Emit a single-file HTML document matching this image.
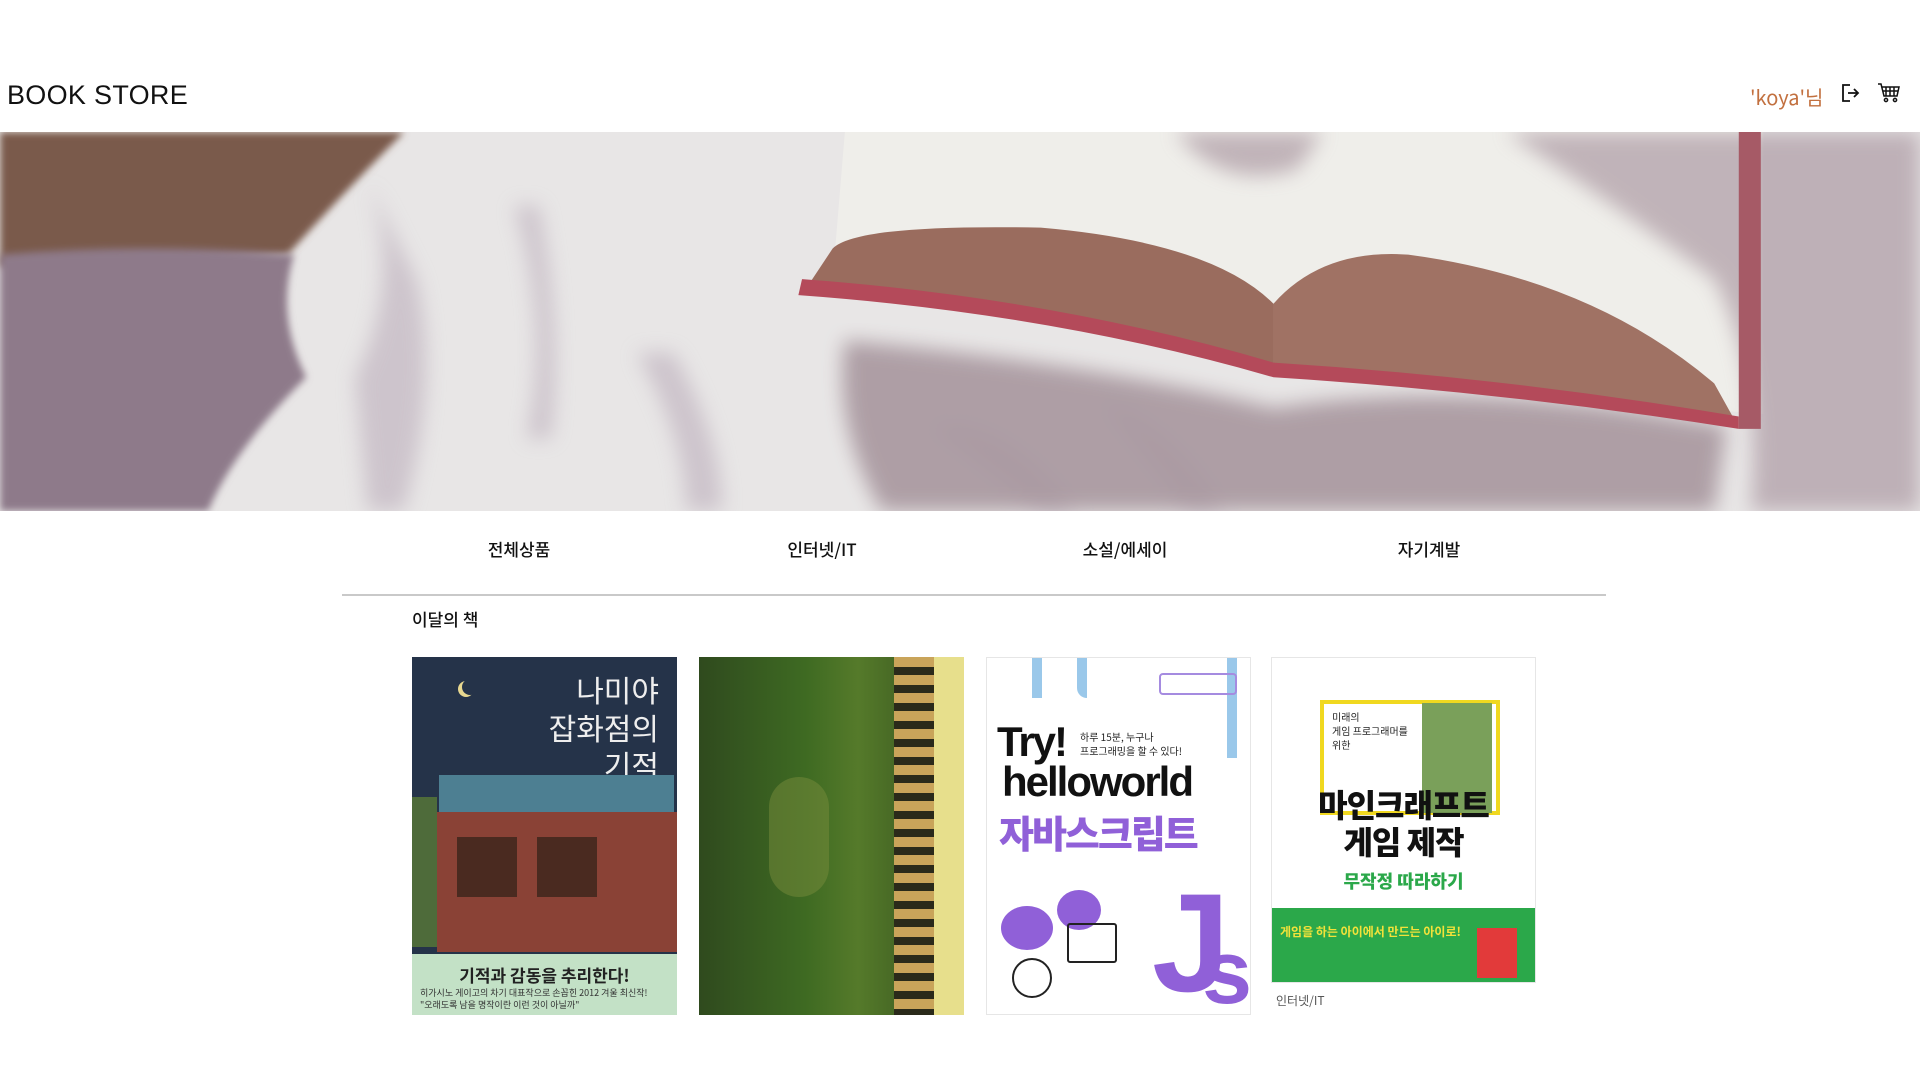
<!DOCTYPE html>
<html><head><meta charset="utf-8">
<style>
*{margin:0;padding:0;box-sizing:border-box}
body{width:1920px;height:1080px;background:#fff;font-family:"Liberation Sans","Noto Sans CJK KR",sans-serif;position:relative;overflow:hidden;color:#111}
.abs{position:absolute}
.logo{left:7px;top:80px;font-size:27px;letter-spacing:0.3px;color:#111}
.user{left:1750px;top:82px;font-size:20px;color:#c2703f}
.nav{top:536px;font-size:17px;font-family:"Noto Sans CJK KR",sans-serif;font-weight:500;transform:translateX(-50%)}
.book{position:absolute;top:657px;width:265px;height:358px;overflow:hidden}
.k{font-family:"Noto Sans CJK KR",sans-serif}
</style></head><body>
<div class="abs logo">BOOK STORE</div>
<div class="abs user k">'koya'님</div>
<svg class="abs" style="left:1841px;top:83px" width="20" height="20" viewBox="0 0 20 20" fill="none" stroke="#111" stroke-width="1.8"><path d="M9 2H2v16h7"/><path d="M7 10h10M13 6l4 4-4 4"/></svg>
<svg class="abs" style="left:1877px;top:82px" width="24" height="22" viewBox="0 0 24 22" fill="none" stroke="#111" stroke-width="1.5"><path d="M1 2h3l3 12h13l2-9H5"/><path d="M9 5v9M13 5v9M17 5v9M6 9h15"/><circle cx="9" cy="18" r="1.6"/><circle cx="18" cy="18" r="1.6"/></svg>

<svg class="abs" style="left:0;top:132px" width="1920" height="379" viewBox="0 0 1568 309" preserveAspectRatio="none">
<defs><filter id="b"><feGaussianBlur stdDeviation="8"/></filter><filter id="b2"><feGaussianBlur stdDeviation="3"/></filter></defs>
<rect width="1568" height="309" fill="#e8e6e6"/>
<g filter="url(#b)" fill="#bcaebb" opacity="0.6">
<path d="M300 40 Q330 120 290 200 L300 309 L330 309 Q360 200 340 120Z"/>
<path d="M420 60 Q450 160 430 250 L450 250 Q460 160 440 60Z"/>
<path d="M520 180 Q560 250 560 309 L590 309 Q590 250 550 180Z"/>
<path d="M760 240 Q820 230 880 309 L850 309Z"/>
<path d="M900 220 Q960 240 1000 309 L970 309Z"/>
</g>
<path d="M0 0 H330 Q280 50 235 100 L0 110Z" fill="#7a5a4c" filter="url(#b2)"/>
<path d="M0 100 Q120 90 240 100 Q225 150 250 200 Q190 260 170 309 H0Z" fill="#8e7a8a" filter="url(#b2)"/>
<path d="M690 0 H1440 V230 L1040 195 L680 120Z" fill="#efeeea"/>
<g filter="url(#b)" fill="#a8949f" opacity="0.65">
<path d="M1230 0 H1568 V309 H1430 Q1440 200 1400 120 Q1320 60 1230 0Z"/>
<path d="M960 0 Q1000 50 1060 30 L1080 0Z"/>
</g>
<path d="M690 170 Q900 190 1040 225 Q1200 200 1410 240 L1400 309 H720 Q680 240 690 170Z" fill="#a8979f" filter="url(#b)" opacity="0.9"/>
<path d="M680 95 Q700 75 850 78 Q990 90 1040 140 L1040 190 Q860 140 660 125Z" fill="#9a6c5e"/>
<path d="M1040 140 Q1080 95 1150 100 Q1300 120 1400 205 L1415 232 Q1260 205 1040 190Z" fill="#a07264"/>
<path d="M655 120 Q860 135 1040 188 Q1230 200 1420 232 L1420 242 Q1230 212 1040 200 Q860 148 652 133Z" fill="#b44a5a"/>
<path d="M1420 0 H1438 V242 H1420Z" fill="#a65a66"/>
</svg>

<div class="abs nav k" style="left:519px">전체상품</div>
<div class="abs nav k" style="left:822px">인터넷/IT</div>
<div class="abs nav k" style="left:1125px">소설/에세이</div>
<div class="abs nav k" style="left:1429px">자기계발</div>
<div class="abs" style="left:342px;top:594px;width:1264px;height:2px;background:#c9c9c9"></div>
<div class="abs k" style="left:412px;top:606px;font-size:17px;font-weight:500">이달의 책</div>

<div class="book" style="left:412px;background:#253349">
 <div class="abs" style="left:50px;top:22px;width:16px;height:16px;border-radius:50%;box-shadow:-4px 2px 0 0 #e8d890"></div>
 <div class="abs k" style="right:18px;top:14px;font-size:30px;color:#eee;text-align:right;line-height:1.25">나미야<br>잡화점의<br>기적</div>
 <div class="abs" style="left:27px;top:118px;width:235px;height:40px;background:#4d7f92"></div>
 <div class="abs" style="left:25px;top:155px;width:240px;height:140px;background:#8a4236"></div>
 <div class="abs" style="left:45px;top:180px;width:60px;height:60px;background:#4a2a20"></div>
 <div class="abs" style="left:125px;top:180px;width:60px;height:60px;background:#4a2a20"></div>
 <div class="abs" style="left:0;top:140px;width:25px;height:150px;background:#4e6b3a"></div>
 <div class="abs" style="left:0;top:297px;width:265px;height:61px;background:#c3e1c6"></div>
 <div class="abs k" style="left:0;width:265px;top:305px;text-align:center;font-size:17px;font-weight:700;color:#222">기적과 감동을 추리한다!</div>
 <div class="abs k" style="left:8px;top:330px;font-size:9px;color:#333;line-height:1.3">히가시노 게이고의 차기 대표작으로 손꼽힌 2012 겨울 최신작!<br>"오래도록 남을 명작이란 이런 것이 아닐까"</div>
</div>

<div class="book" style="left:699px;background:linear-gradient(90deg,#2f4a1e,#3e6a22 40%,#557a2a 60%,#2e4a1c)">
 <div class="abs" style="left:195px;top:0;width:40px;height:358px;background:repeating-linear-gradient(180deg,#c9a45a 0 10px,#2a2a1a 10px 18px)"></div>
 <div class="abs" style="left:235px;top:0;width:30px;height:358px;background:#e7df8c"></div>
 <div class="abs" style="left:70px;top:120px;width:60px;height:120px;background:rgba(120,140,60,.5);border-radius:30px"></div>
</div>

<div class="book" style="left:986px;background:#fff;border:1px solid #e6e6e6">
 <div class="abs" style="left:45px;top:0;width:10px;height:40px;background:#9ac8ea"></div>
 <div class="abs" style="left:90px;top:0;width:10px;height:40px;background:#9ac8ea;border-radius:0 0 0 10px"></div>
 <div class="abs" style="left:240px;top:0;width:10px;height:100px;background:#9ac8ea"></div>
 <div class="abs" style="left:172px;top:15px;width:78px;height:22px;border:2px solid #a58be0;border-radius:4px"></div>
 <div class="abs" style="left:10px;top:60px;font-size:42px;font-weight:700;letter-spacing:-2px;color:#111">Try!</div>
 <div class="abs k" style="left:93px;top:72px;font-size:10px;color:#222;line-height:1.4">하루 15분, 누구나<br>프로그래밍을 할 수 있다!</div>
 <div class="abs" style="left:15px;top:100px;font-size:42px;font-weight:700;letter-spacing:-2px;color:#111">helloworld</div>
 <div class="abs k" style="left:12px;top:146px;font-size:38px;font-weight:900;color:#9060d8;letter-spacing:-2px">자바스크립트</div>
 <div class="abs" style="left:165px;top:215px;font-size:140px;font-weight:700;color:#9060d8;line-height:1">J</div>
 <div class="abs" style="left:215px;top:270px;font-size:90px;font-weight:700;color:#9060d8;line-height:1">s</div>
 <div class="abs" style="left:14px;top:248px;width:52px;height:44px;border-radius:50%;background:#9060d8"></div>
 <div class="abs" style="left:70px;top:232px;width:44px;height:40px;border-radius:50%;background:#9060d8"></div>
 <div class="abs" style="left:80px;top:265px;width:50px;height:40px;border:2px solid #222;border-radius:3px"></div>
 <div class="abs" style="left:25px;top:300px;width:40px;height:40px;border:2px solid #222;border-radius:50%"></div>
</div>

<div class="book" style="left:1271px;height:326px;background:#fff;border:1px solid #e6e6e6">
 <div class="abs" style="left:48px;top:42px;width:180px;height:115px;border:4px solid #f0d820"></div>
 <div class="abs" style="left:150px;top:45px;width:70px;height:110px;background:#7aa05a"></div>
 <div class="abs k" style="left:60px;top:52px;font-size:10px;line-height:1.4;color:#222">미래의<br>게임 프로그래머를<br>위한</div>
 <div class="abs k" style="left:0;width:263px;top:128px;text-align:center;font-size:32px;font-weight:900;line-height:1.15;color:#111;letter-spacing:-1px">마인크래프트<br>게임 제작</div>
 <div class="abs k" style="left:0;width:263px;top:210px;text-align:center;font-size:18px;font-weight:900;color:#2ba84a">무작정 따라하기</div>
 <div class="abs" style="left:0;top:250px;width:265px;height:76px;background:#2ba84a"></div>
 <div class="abs k" style="left:8px;top:265px;font-size:12px;font-weight:700;color:#f3e23a">게임을 하는 아이에서 만드는 아이로!</div>
 <div class="abs" style="left:205px;top:270px;width:40px;height:50px;background:#e23a3a"></div>
</div>
<div class="abs k" style="left:1276px;top:992px;font-size:12px;color:#555">인터넷/IT</div>
</body></html>
